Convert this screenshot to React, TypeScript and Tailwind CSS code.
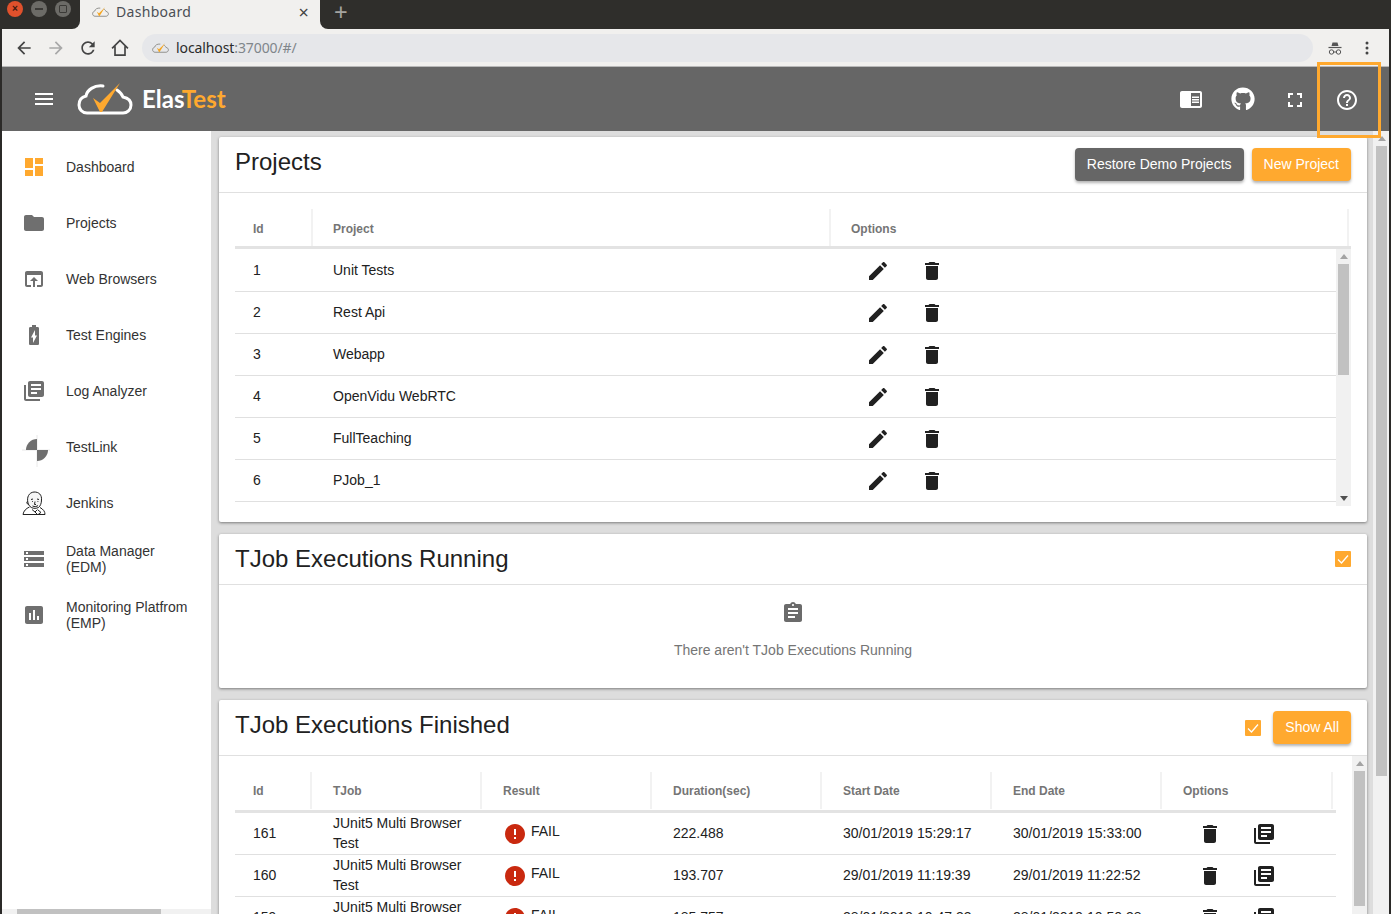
import React from 'react'
import { FaGithub } from 'react-icons/fa'

const paths = {
  menu: 'M3 18h18v-2H3v2zm0-5h18v-2H3v2zm0-7v2h18V6H3z',
  dashboard: 'M3 13h8V3H3v10zm0 8h8v-6H3v6zm10 0h8V11h-8v10zm0-18v6h8V3h-8z',
  folder: 'M10 4H4c-1.1 0-1.99.9-1.99 2L2 18c0 1.1.9 2 2 2h16c1.1 0 2-.9 2-2V8c0-1.1-.9-2-2-2h-8l-2-2z',
  browser: 'M19 4H5c-1.11 0-2 .9-2 2v12c0 1.1.89 2 2 2h4v-2H5V8h14v10h-4v2h4c1.1 0 2-.9 2-2V6c0-1.1-.89-2-2-2zm-7 6l-4 4h3v6h2v-6h3l-4-4z',
  battery: 'M15.67 4H14V2h-4v2H8.33C7.6 4 7 4.6 7 5.33v15.33C7 21.4 7.6 22 8.33 22h7.33c.74 0 1.34-.6 1.34-1.33V5.33C17 4.6 16.4 4 15.67 4zM11 20v-5.5H9L13 7v5.5h2L11 20z',
  books: 'M4 6H2v14c0 1.1.9 2 2 2h14v-2H4V6zm16-4H8c-1.1 0-2 .9-2 2v12c0 1.1.9 2 2 2h12c1.1 0 2-.9 2-2V4c0-1.1-.9-2-2-2zm-1 9H9V9h10v2zm-4 4H9v-2h6v2zm4-8H9V5h10v2z',
  storage: 'M2 20h20v-4H2v4zm2-3h2v2H4v-2zM2 4v4h20V4H2zm4 3H4V5h2v2zm-4 7h20v-4H2v4zm2-3h2v2H4v-2z',
  assessment: 'M19 3H5c-1.1 0-2 .9-2 2v14c0 1.1.9 2 2 2h14c1.1 0 2-.9 2-2V5c0-1.1-.9-2-2-2zM9 17H7v-7h2v7zm4 0h-2V7h2v10zm4 0h-2v-4h2v4z',
  edit: 'M3 17.25V21h3.75L17.81 9.94l-3.75-3.75L3 17.25zM20.71 7.04c.39-.39.39-1.02 0-1.41l-2.34-2.34c-.39-.39-1.02-.39-1.41 0l-1.83 1.83 3.75 3.75 1.83-1.83z',
  trash: 'M6 19c0 1.1.9 2 2 2h8c1.1 0 2-.9 2-2V7H6v12zM19 4h-3.5l-1-1h-5l-1 1H5v2h14V4z',
  assignment: 'M19 3h-4.18C14.4 1.84 13.3 1 12 1c-1.3 0-2.4.84-2.82 2H5c-1.1 0-2 .9-2 2v14c0 1.1.9 2 2 2h14c1.1 0 2-.9 2-2V5c0-1.1-.9-2-2-2zm-7 0c.55 0 1 .45 1 1s-.45 1-1 1-1-.45-1-1 .45-1 1-1zm2 14H7v-2h7v2zm3-4H7v-2h10v2zm0-4H7V7h10v2z',
  fullscreen: 'M7 14H5v5h5v-2H7v-3zm-2-4h2V7h3V5H5v5zm12 7h-3v2h5v-5h-2v3zM14 5v2h3v3h2V5h-5z',
  help: 'M11 18h2v-2h-2v2zm1-16C6.48 2 2 6.48 2 12s4.48 10 10 10 10-4.48 10-10S17.52 2 12 2zm0 18c-4.41 0-8-3.59-8-8s3.59-8 8-8 8 3.59 8 8-3.59 8-8 8zm0-14c-2.21 0-4 1.79-4 4h2c0-1.1.9-2 2-2s2 .9 2 2c0 2-3 1.75-3 5h2c0-2.25 3-2.5 3-5 0-2.21-1.79-4-4-4z',
  error: 'M12 2C6.48 2 2 6.48 2 12s4.48 10 10 10 10-4.48 10-10S17.52 2 12 2zm1 15h-2v-2h2v2zm0-4h-2V7h2v6z',
  back: 'M20 11H7.83l5.59-5.59L12 4l-8 8 8 8 1.41-1.41L7.83 13H20v-2z',
  forward: 'M12 4l-1.41 1.41L16.17 11H4v2h12.17l-5.58 5.59L12 20l8-8z',
  refresh: 'M17.65 6.35C16.2 4.9 14.21 4 12 4c-4.42 0-7.99 3.58-7.99 8s3.57 8 7.99 8c3.73 0 6.84-2.55 7.73-6h-2.08c-.82 2.33-3.04 4-5.65 4-3.31 0-6-2.69-6-6s2.69-6 6-6c1.66 0 3.14.69 4.22 1.78L13 11h7V4l-2.35 2.35z',
  reader: 'M13 12h7v1.5h-7zm0-2.5h7V11h-7zm0 5h7V16h-7zM21 4H3c-1.1 0-2 .9-2 2v13c0 1.1.9 2 2 2h18c1.1 0 2-.9 2-2V6c0-1.1-.9-2-2-2zm0 15h-9V6h9v13z',
}

function Icon({ name, className }: { name: keyof typeof paths; className: string }) {
  return (
    <svg viewBox="0 0 24 24" fill="currentColor" className={'shrink-0 ' + className}>
      <path d={paths[name]} />
    </svg>
  )
}

function CloudLogo({ className, check }: { className: string; check: string }) {
  return (
    <svg viewBox="0 0 56 32" fill="none" className={className}>
      <path
        d="M26 3C17 2 10 7 9 13C5 14 2 17 2 22C2 26 5 30 10 30H46C50 30 54 27 54 22C54 18 51 15 46 14C45 11 43 9 40 7"
        stroke="currentColor"
        strokeWidth="3"
        strokeLinecap="round"
      />
      <path d="M16 15L23 20L43 0L25 29L23 29Z" fill={check} />
    </svg>
  )
}

function Favicon() {
  return <CloudLogo className="h-[10px] w-[17px] shrink-0 text-[#8a8a86]" check="#f5a623" />
}

function Incognito() {
  return (
    <svg viewBox="0 0 16 16" className="h-4 w-4 text-[#555]" fill="none" stroke="currentColor">
      <path d="M4.5 6L5.5 2.5H10.5L11.5 6Z" fill="currentColor" stroke="none" />
      <path d="M1.5 7.5H14.5" strokeWidth="1.2" />
      <circle cx="4.5" cy="12" r="2.2" strokeWidth="1" />
      <circle cx="11.5" cy="12" r="2.2" strokeWidth="1" />
      <path d="M6.7 12H9.3" strokeWidth="1" />
    </svg>
  )
}

function TestLinkIcon() {
  return (
    <div className="h-6 w-6 shrink-0">
      <svg viewBox="0 0 28 32" className="h-8 w-7 overflow-visible">
        <path d="M15 0V32M0 15H28" stroke="#e8e8e8" strokeWidth="1" />
        <path d="M15 15V4A11 11 0 0 0 4 15Z" fill="#6f6f6f" />
        <path d="M15 15H26A11 11 0 0 1 15 26Z" fill="#6f6f6f" />
      </svg>
    </div>
  )
}

function JenkinsIcon() {
  return (
    <svg viewBox="0 0 24 24" className="h-6 w-6 shrink-0 text-[#222]" fill="none" stroke="currentColor" strokeWidth="1">
      <path d="M6 12C4.5 6 7 1.5 12 1C17 .8 20 4 19.5 9C19.5 12 18.5 15 16.5 16.5C13.5 18 10 17.5 8 15.5C7 14.5 6.5 13.5 6 12Z" fill="#f6f6f6" />
      <path d="M5.5 10.5C4.5 10.5 4.5 13 6.5 13.5M9 8.5L11 8M15 8L17 8.5M10 10.5h.8M15.5 10.5h.8M13 10.5L12.5 13.5H14M10.5 15C12.5 16 15 15.5 16 14.5" />
      <path d="M7.5 16C4 17.5 1.5 20 1 23.5H23C23 20.5 21.5 18.5 18 16.5" />
      <path d="M10 18.5L13 21L15.5 18.5M16 19L19 21.5L16.5 23M13 21L15 23" />
    </svg>
  )
}

const navItems = [
  { label: 'Dashboard', icon: <Icon name="dashboard" className="h-6 w-6 text-[#ffa92f]" /> },
  { label: 'Projects', icon: <Icon name="folder" className="h-6 w-6 text-[#6f6f6f]" /> },
  { label: 'Web Browsers', icon: <Icon name="browser" className="h-6 w-6 text-[#6f6f6f]" /> },
  { label: 'Test Engines', icon: <Icon name="battery" className="h-6 w-6 text-[#6f6f6f]" /> },
  { label: 'Log Analyzer', icon: <Icon name="books" className="h-6 w-6 text-[#6f6f6f]" /> },
  { label: 'TestLink', icon: <TestLinkIcon /> },
  { label: 'Jenkins', icon: <JenkinsIcon /> },
  { label: 'Data Manager (EDM)', icon: <Icon name="storage" className="h-6 w-6 text-[#6f6f6f]" /> },
  { label: 'Monitoring Platfrom (EMP)', icon: <Icon name="assessment" className="h-6 w-6 text-[#6f6f6f]" /> },
]

const projects = ['Unit Tests', 'Rest Api', 'Webapp', 'OpenVidu WebRTC', 'FullTeaching', 'PJob_1']

const executions = [
  { id: '161', duration: '222.488', start: '30/01/2019 15:29:17', end: '30/01/2019 15:33:00' },
  { id: '160', duration: '193.707', start: '29/01/2019 11:19:39', end: '29/01/2019 11:22:52' },
  { id: '159', duration: '185.757', start: '28/01/2019 10:47:33', end: '28/01/2019 10:50:38' },
]

function Arrow({ dir, color }: { dir: 'up' | 'down'; color: string }) {
  return (
    <svg viewBox="0 0 8 5" className="h-[5px] w-2 shrink-0">
      <path d={dir === 'up' ? 'M4 0L8 5H0Z' : 'M0 0H8L4 5Z'} fill={color} />
    </svg>
  )
}

function Check() {
  return (
    <div className="flex h-4 w-4 items-center justify-center rounded-[1px] bg-[#ffa92f]">
      <svg viewBox="0 0 16 16" className="h-4 w-4" fill="none" stroke="#fff" strokeWidth="1.3">
        <path d="M3 8.5L6.5 12L13 4.5" />
      </svg>
    </div>
  )
}

function HeadCell({ children, pad }: { children: React.ReactNode; pad: string }) {
  return (
    <div className={'flex h-[37px] items-center border-r-2 border-[#f2f2f2] text-xs font-bold text-[#757575] ' + pad}>
      {children}
    </div>
  )
}

export default function App() {
  return (
    <div className="flex h-[914px] flex-col overflow-hidden bg-[#2b2a28] font-['Liberation_Sans',Arial,sans-serif] text-sm text-[#212121]">
      {/* browser tab strip */}
      <div className="flex h-[29px] shrink-0 bg-[#f1f0ee]">
        <div className="flex w-20 items-center gap-2 rounded-br-lg bg-[#2f2e2b] pb-[11px] pl-[7px]">
          <div className="flex h-4 w-4 items-center justify-center rounded-full bg-[#e0512c] text-[10px] font-bold leading-none text-[#3c1a10]">×</div>
          <div className="flex h-4 w-4 items-center justify-center rounded-full bg-[#6c6b67]">
            <div className="h-[2px] w-2 bg-[#3b3a37]" />
          </div>
          <div className="flex h-4 w-4 items-center justify-center rounded-full bg-[#6c6b67]">
            <div className="h-2 w-2 rounded-[1px] border border-[#3b3a37]" />
          </div>
        </div>
        <div className="flex w-[240px] items-center pb-[5px] pl-3 pr-[11px] font-['Noto_Sans',sans-serif] text-sm tracking-[0.3px] text-[#4b4f55]">
          <Favicon />
          <span className="ml-[7px] flex-1">Dashboard</span>
          <span className="text-lg leading-none text-[#444]">×</span>
        </div>
        <div className="flex flex-1 items-center rounded-bl-lg bg-[#2f2e2b] pb-[5px] pl-[14px]">
          <span className="font-['Noto_Sans',sans-serif] text-2xl leading-6 text-[#a5a4a0]">+</span>
        </div>
      </div>

      {/* browser toolbar */}
      <div className="mx-[2px] flex h-[38px] shrink-0 items-center border-b border-[#b8b8b8] bg-[#f1f0ee]">
        <div className="flex w-[140px] items-center pl-[12px]">
          <Icon name="back" className="h-5 w-5 text-[#444]" />
          <Icon name="forward" className="ml-3 h-5 w-5 text-[#a8a8a8]" />
          <Icon name="refresh" className="ml-3 h-5 w-5 text-[#444]" />
          <svg viewBox="0 0 24 24" className="ml-3 h-5 w-5 shrink-0 text-[#444]" fill="none" stroke="currentColor" strokeWidth="2">
            <path d="M2.5 12.5L12 3L21.5 12.5M6 10V20.5H18V10" />
          </svg>
        </div>
        <div className="flex h-7 w-[1171px] items-center rounded-full bg-[#e6e7ea] pl-[10px] font-['Noto_Sans',sans-serif] text-sm tracking-[-0.1px]">
          <Favicon />
          <span className="ml-[7px] text-[#2b2b2b]">localhost</span>
          <span className="text-[#80868b]">:37000/#/</span>
        </div>
        <div className="flex flex-1 items-center pl-[14px]">
          <Incognito />
          <svg viewBox="0 0 4 14" className="ml-[22px] h-[14px] w-1 text-[#444]" fill="currentColor">
            <circle cx="2" cy="2" r="1.5" />
            <circle cx="2" cy="7" r="1.5" />
            <circle cx="2" cy="12" r="1.5" />
          </svg>
        </div>
      </div>

      {/* app toolbar */}
      <header className="relative mx-[2px] flex h-16 shrink-0 items-center bg-[#666666] pl-[30px] pr-4 text-white">
        <Icon name="menu" className="h-6 w-6" />
        <CloudLogo className="ml-[21px] h-8 w-14 text-white" check="#ffa92f" />
        <div className="ml-[9px] font-['Lato',sans-serif] text-[24px] font-bold leading-none">
          Elas<span className="text-[#ffa92f]">Test</span>
        </div>
        <div className="ml-auto flex items-center">
          <div className="flex w-[52px] justify-center"><Icon name="reader" className="-mt-px h-6 w-6" /></div>
          <div className="flex w-[52px] justify-center"><FaGithub className="-mt-px h-6 w-6" /></div>
          <div className="flex w-[52px] justify-center"><Icon name="fullscreen" className="mt-px h-6 w-6" /></div>
          <div className="flex w-[52px] justify-center"><Icon name="help" className="mt-px h-6 w-6" /></div>
        </div>
        {/* highlight box around the help button */}
        <div className="absolute left-[1315px] top-[-5px] h-[76px] w-16 border-[3px] border-[#ffa92f]" />
      </header>

      <div className="mx-[2px] flex min-h-0 flex-1 bg-[#dddddd]">
        {/* side nav */}
        <aside className="flex w-[209px] shrink-0 flex-col bg-white">
          <nav className="flex-1 pt-2">
            {navItems.map((item) => (
              <div key={item.label} className="flex h-14 items-center gap-5 pl-5 pr-3 leading-4 text-[#333]">
                {item.icon}
                <span className="w-[124px]">{item.label}</span>
              </div>
            ))}
          </nav>
          <div className="flex h-[5px] items-start bg-[#f1f1f1]">
            <div className="ml-[15px] h-[5px] w-[144px] bg-[#c1c1c1]" />
          </div>
        </aside>

        {/* page content */}
        <main className="min-w-0 flex-1 overflow-hidden pl-2 pr-[6px] pt-[6px]">
          <section className="rounded-[2px] bg-white shadow-[0_1px_3px_rgba(0,0,0,0.45)]">
            <div className="flex h-14 items-center justify-between border-b border-[#e0e0e0] px-4">
              <h2 className="mb-[5px] text-2xl leading-8 text-[#212121]">Projects</h2>
              <div className="flex gap-2">
                <button className="h-[33px] rounded bg-[#666666] px-3 pb-[2px] text-sm text-white shadow-[0_2px_3px_rgba(0,0,0,0.3)]">Restore Demo Projects</button>
                <button className="h-[33px] rounded bg-[#ffa92f] px-3 pb-[2px] text-sm text-white shadow-[0_2px_3px_rgba(0,0,0,0.3)]">New Project</button>
              </div>
            </div>
            <div className="px-4 pb-4 pt-4">
              <div className="grid grid-cols-[78px_518px_518px] border-b-[3px] border-[#e3e3e3]">
                <HeadCell pad="pl-[18px] pt-[2px]">Id</HeadCell>
                <HeadCell pad="pl-5 pt-[2px]">Project</HeadCell>
                <HeadCell pad="pl-5 pt-[2px]">Options</HeadCell>
              </div>
              <div className="flex h-[257px] overflow-hidden">
                <div className="flex-1 pt-px">
                  {projects.map((name, i) => (
                    <div key={name} className="grid h-[42px] grid-cols-[78px_518px_1fr] items-center border-b border-[#e0e0e0]">
                      <div className="mb-[2px] pl-[18px]">{i + 1}</div>
                      <div className="mb-[2px] pl-5">{name}</div>
                      <div className="flex gap-[30px] pl-[35px]">
                        <Icon name="edit" className="h-6 w-6" />
                        <Icon name="trash" className="h-6 w-6" />
                      </div>
                    </div>
                  ))}
                </div>
                <div className="flex w-[15px] flex-col items-center bg-[#f1f1f1] py-[5px]">
                  <Arrow dir="up" color="#a3a3a3" />
                  <div className="mt-[5px] h-[111px] w-[11px] bg-[#c1c1c1]" />
                  <div className="mt-auto"><Arrow dir="down" color="#505050" /></div>
                </div>
              </div>
            </div>
          </section>

          <section className="mt-3 rounded-[2px] bg-white shadow-[0_1px_3px_rgba(0,0,0,0.45)]">
            <div className="flex h-[51px] items-center justify-between border-b border-[#e0e0e0] px-4">
              <h2 className="text-2xl leading-8 text-[#212121]">TJob Executions Running</h2>
              <Check />
            </div>
            <div className="flex h-[103px] flex-col items-center pt-4 text-[#757575]">
              <Icon name="assignment" className="h-6 w-6 text-[#6b6b6b]" />
              <p className="mt-[17px] leading-4">There aren't TJob Executions Running</p>
            </div>
          </section>

          <section className="mt-3 rounded-[2px] bg-white shadow-[0_1px_3px_rgba(0,0,0,0.45)]">
            <div className="flex h-14 items-center justify-between border-b border-[#e0e0e0] pl-4 pr-4">
              <h2 className="mb-[6px] text-2xl leading-8 text-[#212121]">TJob Executions Finished</h2>
              <div className="flex items-center gap-3">
                <Check />
                <button className="h-[33px] rounded bg-[#ffa92f] px-3 pb-[2px] text-sm text-white shadow-[0_2px_3px_rgba(0,0,0,0.3)]">Show All</button>
              </div>
            </div>
            <div className="flex pl-4">
              <div className="w-[1101px] pt-4">
                <div className="grid grid-cols-[77px_170px_170px_170px_170px_170px_171px] border-b-[3px] border-[#e3e3e3] pb-px">
                  <HeadCell pad="pl-[18px]">Id</HeadCell>
                  <HeadCell pad="pl-[21px]">TJob</HeadCell>
                  <HeadCell pad="pl-[21px]">Result</HeadCell>
                  <HeadCell pad="pl-[21px]">Duration(sec)</HeadCell>
                  <HeadCell pad="pl-[21px]">Start Date</HeadCell>
                  <HeadCell pad="pl-[21px]">End Date</HeadCell>
                  <HeadCell pad="pl-[21px]">Options</HeadCell>
                </div>
                {executions.map((row) => (
                  <div key={row.id} className="grid h-[42px] grid-cols-[77px_170px_170px_170px_170px_170px_1fr] items-center border-b border-[#e0e0e0]">
                    <div className="mb-[2px] pl-[18px]">{row.id}</div>
                    <div className="mb-[2px] pl-[21px] pr-4 leading-5">JUnit5 Multi Browser Test</div>
                    <div className="flex items-center gap-1 pl-[21px]">
                      <Icon name="error" className="h-6 w-6 text-[#c9290f]" />
                      <span className="mb-[6px]">FAIL</span>
                    </div>
                    <div className="mb-[2px] pl-[21px]">{row.duration}</div>
                    <div className="mb-[2px] pl-[21px]">{row.start}</div>
                    <div className="mb-[2px] pl-[21px]">{row.end}</div>
                    <div className="flex gap-[30px] pl-9">
                      <Icon name="trash" className="h-6 w-6" />
                      <Icon name="books" className="h-6 w-6" />
                    </div>
                  </div>
                ))}
              </div>
              <div className="ml-4 flex h-[170px] w-[15px] flex-col items-center bg-[#f1f1f1] pt-[5px]">
                <Arrow dir="up" color="#a3a3a3" />
                <div className="mt-[5px] h-[135px] w-[11px] bg-[#c1c1c1]" />
              </div>
            </div>
          </section>
        </main>

        {/* page scrollbar */}
        <div className="flex w-4 shrink-0 flex-col items-center bg-[#f1f1f1] pl-px pt-[5px]">
          <Arrow dir="up" color="#a3a3a3" />
          <div className="mt-[5px] h-[630px] w-[11px] bg-[#c1c1c1]" />
        </div>
      </div>
    </div>
  )
}
